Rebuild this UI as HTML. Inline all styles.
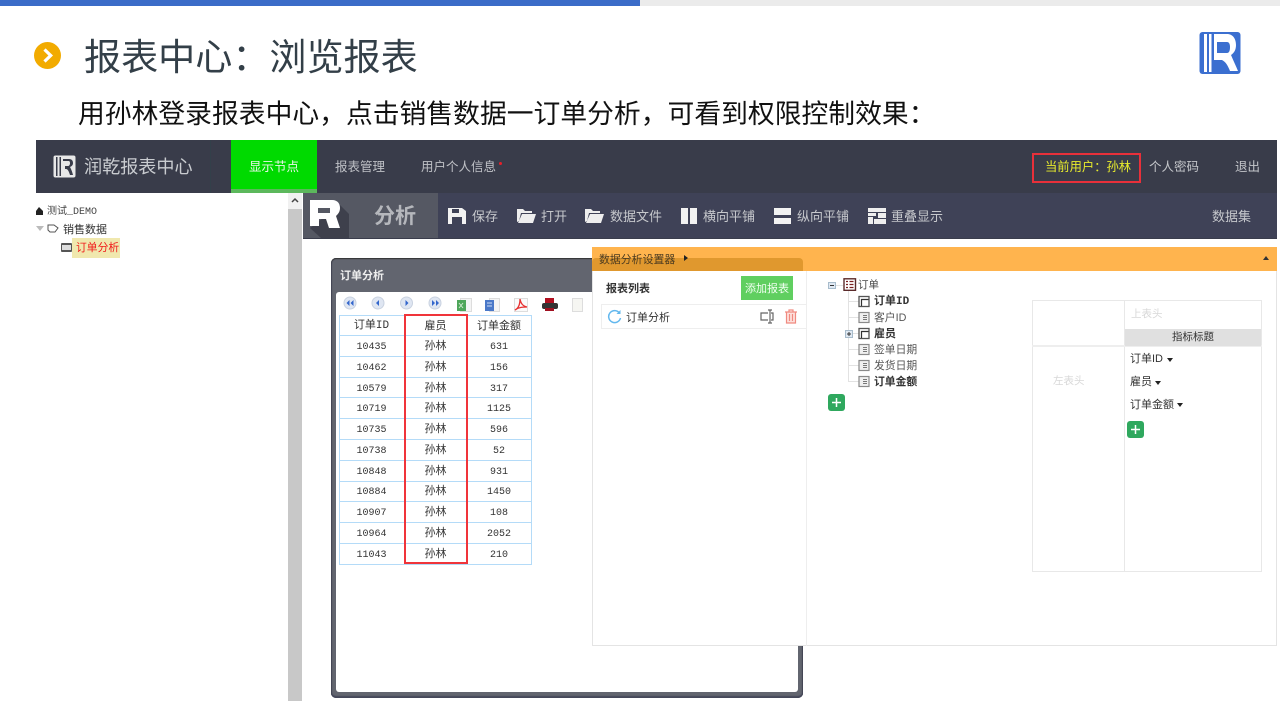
<!DOCTYPE html>
<html><head><meta charset="utf-8">
<style>
html,body{margin:0;padding:0;background:#fff}
#p{position:relative;width:1280px;height:720px;overflow:hidden;background:#fff;font-family:"Liberation Sans","Noto Sans CJK SC",sans-serif}
#p div,#p span.a,#p svg{position:absolute}
.t{white-space:nowrap;line-height:1}
.m{font-family:"Liberation Mono","Noto Sans CJK SC",monospace}
.c{position:absolute;text-align:center;font-size:11px;color:#333;line-height:20px;height:20px;white-space:nowrap}
.c[style*="font-size:10px"]{padding-top:2px;height:18px}
.l{background:#b4dbf8}
</style></head><body><div id="p">
<div style="left:0;top:0;width:640px;height:6px;background:#3b6cc8"></div>
<div style="left:640px;top:0;width:640px;height:6px;background:#ebebeb"></div>

<svg style="left:34px;top:42px" width="27" height="27" viewBox="0 0 27 27"><circle cx="13.500" cy="13.500" r="13.500" fill="#f2ab00"/><path d="M10.500 7.500l6.200 6-6.200 6" fill="none" stroke="#fff" stroke-width="3.200"/></svg>
<div class="t" style="left:84px;top:39px;font-size:37.100px;color:#333f48">报表中心：浏览报表</div>
<div class="t" style="left:78px;top:101px;font-size:26.800px;color:#111">用孙林登录报表中心，点击销售数据一订单分析，可看到权限控制效果：</div>

<svg style="left:1199px;top:32px" width="42" height="43" viewBox="0 0 42 43"><rect x="0.500" y="0" width="41" height="42" rx="3" fill="#3b6fd0"/><rect x="5" y="2" width="3" height="38" fill="#fff"/><rect x="10" y="2" width="2.500" height="38" fill="#fff"/><path fill-rule="evenodd" d="M15 2H28C34 2 37 7 37 13C37 18 35 21 32 23C34 28 37 34 39 39H31C29 34 27 30 23 28H15ZM18 10V21H28C30 21 31 19 31 15C31 12 30 10 28 10Z" fill="#fff"/></svg>

<!-- top nav -->
<div style="left:36px;top:140px;width:1241px;height:53px;background:#393c4a"></div>
<div style="left:210px;top:140px;width:1px;height:53px;background:#33404a"></div>
<div style="left:231px;top:140px;width:86px;height:53px;background:#00da00"></div>
<div style="left:231px;top:189px;width:86px;height:4px;background:#5cb85c"></div>
<svg style="left:53px;top:155px" width="23" height="23" viewBox="0 0 23 23"><rect x="0.500" y="0.500" width="22" height="22" rx="2" fill="#e8e8e8"/><rect x="3" y="2" width="1.500" height="19" fill="#393c4a"/><rect x="6.500" y="2" width="1.500" height="19" fill="#393c4a"/><path d="M10 4h6c3 0 4 2 4 4s-1 3-3 4c1 2 2 4 3 8h-3c-1-3-2-6-4-6h-1v-3h3c1 0 2-1 2-3s-1-2-2-2h-5z" fill="#393c4a"/></svg>
<div class="t" style="left:84px;top:158px;font-size:18.100px;color:#c9ccd0">润乾报表中心</div>
<div class="t" style="left:249px;top:161px;font-size:12.500px;color:#eaf5ea">显示节点</div>
<div class="t" style="left:335px;top:161px;font-size:12.500px;color:#bfc1c6">报表管理</div>
<div class="t" style="left:421px;top:161px;font-size:12.500px;color:#bfc1c6">用户个人信息</div>
<div style="left:499px;top:162px;width:3px;height:3px;background:#e8202a;border-radius:2px"></div>
<div style="left:1032px;top:153px;width:105px;height:26px;border:2px solid #e8303a"></div>
<div class="t" style="left:1045px;top:161px;font-size:12.300px;color:#e8ec2c">当前用户：孙林</div>
<div class="t" style="left:1149px;top:161px;font-size:12.500px;color:#c4c6ca">个人密码</div>
<div class="t" style="left:1235px;top:161px;font-size:12.500px;color:#c4c6ca">退出</div>

<!-- left tree -->
<svg style="left:36px;top:207px" width="7" height="8" viewBox="0 0 7 8"><path d="M0 4L3 0l4 4v4H0z" fill="#222"/></svg>
<div class="t" style="left:47px;top:207px;font-size:10px;color:#444">测试<span class="m">_DEMO</span></div>
<div style="left:36px;top:226px;width:0;height:0;border-left:4.500px solid transparent;border-right:4.500px solid transparent;border-top:5px solid #bbb"></div>
<svg style="left:47px;top:224px" width="12" height="10" viewBox="0 0 12 10"><path d="M1 1h6l4 3-3 4H3L1 6z" fill="#fff" stroke="#555" stroke-width="1"/></svg>
<div class="t" style="left:63px;top:225px;font-size:11px;color:#333">销售数据</div>
<div style="left:72px;top:238px;width:48px;height:20px;background:#f0e8ae"></div>
<div style="left:61px;top:243px;width:11px;height:9px;background:#555;border-radius:1px"></div>
<div style="left:62px;top:245px;width:9px;height:5px;background:#ddd"></div>
<div class="t" style="left:76px;top:243px;font-size:10.800px;color:#f01818">订单分析</div>

<!-- scrollbar -->
<div style="left:288px;top:193px;width:14px;height:508px;background:#c8c8c8"></div>
<div style="left:288px;top:193px;width:14px;height:16px;background:#f1f1f1"></div>
<svg style="left:291px;top:197px" width="8" height="6" viewBox="0 0 8 6"><path d="M1 5l3-3 3 3" fill="none" stroke="#444" stroke-width="1.500"/></svg>

<!-- toolbar -->
<div style="left:303px;top:193px;width:974px;height:45px;background:#3f4257"></div>
<div style="left:303px;top:238px;width:974px;height:1px;background:#3a3d4c"></div>
<div style="left:303px;top:193px;width:135px;height:45px;background:#555863"></div>
<svg style="left:303px;top:193px" width="46" height="45" viewBox="0 0 46 45"><path d="M37 12L46 21V45H18L7 35z" fill="#3e404c"/><path fill-rule="evenodd" d="M7 7H29C35 7 37 11 37 15C37 19 35 21 33 23L37 35H26L23 26H16V33H7ZM15 15V20H27V15Z" fill="#fff"/></svg>
<div class="t" style="left:374px;top:206px;font-size:21px;font-weight:bold;color:#b5b7bc">分析</div>
<svg style="left:448px;top:208px" width="18" height="16" viewBox="0 0 18 16"><path d="M0 0h14l4 3v13H0z" fill="#f2f2f2"/><rect x="4" y="1" width="7" height="4" fill="#3f4257"/><rect x="4" y="9" width="10" height="7" fill="#3f4257"/></svg>
<div class="t" style="left:472px;top:210px;font-size:13px;color:#c6c8cc">保存</div>
<svg style="left:517px;top:208px" width="19" height="16" viewBox="0 0 19 16"><path d="M0 1h6l2 2h7v2H4L2 13l-2 1z" fill="#eee"/><path d="M5 6h14l-3 9H1z" fill="#eee"/></svg>
<div class="t" style="left:541px;top:210px;font-size:13px;color:#c6c8cc">打开</div>
<svg style="left:585px;top:208px" width="19" height="16" viewBox="0 0 19 16"><path d="M0 1h6l2 2h7v2H4L2 13l-2 1z" fill="#eee"/><path d="M5 6h14l-3 9H1z" fill="#eee"/></svg>
<div class="t" style="left:610px;top:210px;font-size:13px;color:#c6c8cc">数据文件</div>
<div style="left:681px;top:208px;width:7px;height:16px;background:#f2f2f2"></div>
<div style="left:690px;top:208px;width:7px;height:16px;background:#f2f2f2"></div>
<div class="t" style="left:703px;top:210px;font-size:13px;color:#c6c8cc">横向平铺</div>
<div style="left:774px;top:208px;width:17px;height:7px;background:#f2f2f2"></div>
<div style="left:774px;top:218px;width:17px;height:6px;background:#f2f2f2"></div>
<div class="t" style="left:797px;top:210px;font-size:13px;color:#c6c8cc">纵向平铺</div>
<svg style="left:868px;top:208px" width="18" height="17" viewBox="0 0 18 17"><path d="M0 0h18v4H0zM0 5h8v3H0zM0 9h5v7H0zM6 11h12v5H6zM10 5h8v5h-8z" fill="#eee"/></svg>
<div class="t" style="left:891px;top:210px;font-size:13px;color:#c6c8cc">重叠显示</div>
<div class="t" style="left:1212px;top:210px;font-size:13px;color:#c6c8cc">数据集</div>

<!-- report window -->
<div style="left:331px;top:258px;width:472px;height:440px;background:#62656f;border-radius:5px;box-shadow:inset 0 1px 1px #333,inset 0 -2px 1px #45485a,inset 1px 0 1px #45485a,inset -1px 0 1px #45485a"></div>
<div style="left:336px;top:292px;width:462px;height:400px;background:#fff;border-radius:3px"></div>
<div class="t" style="left:340px;top:271px;font-size:11px;font-weight:bold;color:#eee">订单分析</div>
<svg style="left:340px;top:295px" width="245" height="18" viewBox="0 0 245 18">
<g fill="#dfe6f2" stroke="#c9d2e0"><circle cx="10" cy="8" r="6"/><circle cx="38" cy="8" r="6"/><circle cx="66.500" cy="8" r="6"/><circle cx="95" cy="8" r="6"/></g>
<g fill="#3366cc"><path d="M6.500 8l3-3v6zM10.500 8l3-3v6zM36 8l3-3v6zM68.500 8l-3-3v6zM92 5l3 3-3 3zM96 5l3 3-3 3z"/></g>
<rect x="120.500" y="3.500" width="11" height="13" fill="#f4f4f4" stroke="#ddd"/><rect x="117" y="5" width="9" height="11" fill="#4ea65a"/><path d="M119 8l4 5M123 8l-4 5" stroke="#cfe8d0"/>
<rect x="149.500" y="3.500" width="10" height="13" fill="#f4f4f4" stroke="#ddd"/><rect x="145" y="5" width="9" height="11" fill="#4a78c8"/><path d="M147 8h5M147 11h5" stroke="#cfdcf4"/>
<rect x="174.500" y="3.500" width="13" height="13" fill="#fafafa" stroke="#ddd"/><path d="M175 15c4-2 5-7 5-11 1 5 3 7 7 8-4 0-8 0-12 3z" fill="none" stroke="#e63030" stroke-width="1.300"/>
<rect x="205" y="3" width="9" height="6" fill="#b01020"/><rect x="202" y="8" width="16" height="6" rx="2" fill="#333"/><rect x="205" y="13" width="9" height="3" fill="#a01020"/>
<rect x="232.500" y="3.500" width="10" height="13" fill="#f6f6f2" stroke="#ddd"/></svg>

<!-- table -->
<div class="l" style="left:339px;top:315px;width:192px;height:1px"></div>
<div class="l" style="left:339px;top:335px;width:192px;height:1px"></div>
<div class="l" style="left:339px;top:356px;width:192px;height:1px"></div>
<div class="l" style="left:339px;top:377px;width:192px;height:1px"></div>
<div class="l" style="left:339px;top:397px;width:192px;height:1px"></div>
<div class="l" style="left:339px;top:418px;width:192px;height:1px"></div>
<div class="l" style="left:339px;top:439px;width:192px;height:1px"></div>
<div class="l" style="left:339px;top:460px;width:192px;height:1px"></div>
<div class="l" style="left:339px;top:481px;width:192px;height:1px"></div>
<div class="l" style="left:339px;top:501px;width:192px;height:1px"></div>
<div class="l" style="left:339px;top:522px;width:192px;height:1px"></div>
<div class="l" style="left:339px;top:543px;width:192px;height:1px"></div>
<div class="l" style="left:339px;top:564px;width:192px;height:1px"></div>
<div class="l" style="left:339px;top:315px;width:1px;height:250px"></div>
<div class="l" style="left:531px;top:315px;width:1px;height:250px"></div>
<div class="c m" style="left:339px;top:316px;width:65px">订单ID</div><div class="c" style="left:404px;top:316px;width:63px">雇员</div><div class="c" style="left:467px;top:316px;width:64px">订单金额</div>
<div class="c m" style="left:339px;top:336px;width:65px;font-size:10px">10435</div><div class="c" style="left:404px;top:336px;width:63px">孙林</div><div class="c m" style="left:467px;top:336px;width:64px;font-size:10px">631</div>
<div class="c m" style="left:339px;top:357px;width:65px;font-size:10px">10462</div><div class="c" style="left:404px;top:357px;width:63px">孙林</div><div class="c m" style="left:467px;top:357px;width:64px;font-size:10px">156</div>
<div class="c m" style="left:339px;top:378px;width:65px;font-size:10px">10579</div><div class="c" style="left:404px;top:378px;width:63px">孙林</div><div class="c m" style="left:467px;top:378px;width:64px;font-size:10px">317</div>
<div class="c m" style="left:339px;top:398px;width:65px;font-size:10px">10719</div><div class="c" style="left:404px;top:398px;width:63px">孙林</div><div class="c m" style="left:467px;top:398px;width:64px;font-size:10px">1125</div>
<div class="c m" style="left:339px;top:419px;width:65px;font-size:10px">10735</div><div class="c" style="left:404px;top:419px;width:63px">孙林</div><div class="c m" style="left:467px;top:419px;width:64px;font-size:10px">596</div>
<div class="c m" style="left:339px;top:440px;width:65px;font-size:10px">10738</div><div class="c" style="left:404px;top:440px;width:63px">孙林</div><div class="c m" style="left:467px;top:440px;width:64px;font-size:10px">52</div>
<div class="c m" style="left:339px;top:461px;width:65px;font-size:10px">10848</div><div class="c" style="left:404px;top:461px;width:63px">孙林</div><div class="c m" style="left:467px;top:461px;width:64px;font-size:10px">931</div>
<div class="c m" style="left:339px;top:481px;width:65px;font-size:10px">10884</div><div class="c" style="left:404px;top:481px;width:63px">孙林</div><div class="c m" style="left:467px;top:481px;width:64px;font-size:10px">1450</div>
<div class="c m" style="left:339px;top:502px;width:65px;font-size:10px">10907</div><div class="c" style="left:404px;top:502px;width:63px">孙林</div><div class="c m" style="left:467px;top:502px;width:64px;font-size:10px">108</div>
<div class="c m" style="left:339px;top:523px;width:65px;font-size:10px">10964</div><div class="c" style="left:404px;top:523px;width:63px">孙林</div><div class="c m" style="left:467px;top:523px;width:64px;font-size:10px">2052</div>
<div class="c m" style="left:339px;top:544px;width:65px;font-size:10px">11043</div><div class="c" style="left:404px;top:544px;width:63px">孙林</div><div class="c m" style="left:467px;top:544px;width:64px;font-size:10px">210</div>
<div style="left:404px;top:314px;width:60px;height:246px;border:2px solid #f0343a"></div>

<!-- settings panel -->
<div style="left:592px;top:247px;width:685px;height:24px;background:#ffb44e"></div>
<div style="left:592px;top:258px;width:211px;height:13px;background:#e0982e;border-radius:4px 4px 0 0"></div>
<div class="t" style="left:599px;top:255px;font-size:10.900px;color:#4a3a20">数据分析设置器</div>
<div style="left:684px;top:255px;width:0;height:0;border-top:3px solid transparent;border-bottom:3px solid transparent;border-left:4px solid #222"></div>
<div style="left:1263px;top:256px;width:0;height:0;border-left:3px solid transparent;border-right:3px solid transparent;border-bottom:4px solid #333"></div>
<div style="left:592px;top:271px;width:685px;height:375px;background:#fff;border:1px solid #e4e4e4;border-top:0;box-sizing:border-box"></div>
<div style="left:806px;top:271px;width:1px;height:375px;background:#eee"></div>
<div style="left:601px;top:304px;width:206px;height:1px;background:#eee"></div>
<div class="t" style="left:606px;top:284px;font-size:11px;font-weight:bold;color:#333">报表列表</div>
<div style="left:741px;top:276px;width:52px;height:24px;background:#60cf60"></div>
<div class="t" style="left:745px;top:284px;font-size:11px;color:#f0fff0">添加报表</div>
<div style="left:601px;top:304px;width:205px;height:25px;border:1px solid #eee;border-right:0;box-sizing:border-box"></div>
<svg style="left:607px;top:309px" width="15" height="15" viewBox="0 0 15 15"><path d="M12.500 4A6 6 0 1 0 13.500 9" fill="none" stroke="#63b8ee" stroke-width="1.500"/><path d="M13.500 1v4h-4z" fill="#63b8ee"/></svg>
<div class="t" style="left:626px;top:313px;font-size:11px;color:#333">订单分析</div>
<svg style="left:760px;top:309px" width="15" height="15" viewBox="0 0 15 15"><path d="M8 4H1v7h7M11 4h2v7h-2M10 1v13M8 1h4M8 14h4" fill="none" stroke="#666" stroke-width="1.200"/></svg>
<svg style="left:784px;top:309px" width="14" height="15" viewBox="0 0 14 15"><path d="M2.500 3v11h9V3z" fill="#fde0dc"/><path d="M1 3h12M5 3V1h4v2M2.500 3v11h9V3M5.500 5v7M8.500 5v7" fill="none" stroke="#f08a80" stroke-width="1.200"/></svg>

<!-- field tree -->
<svg style="left:826px;top:276px" width="100" height="125" viewBox="0 0 100 125">
<path d="M22.500 14v92M22.500 25.500h10M22.500 41.500h10M22.500 57.500h10M22.500 73.500h10M22.500 89.500h10M22.500 105.500h10M9 9.500h8" fill="none" stroke="#e2e2e2"/>
<rect x="2.500" y="6.500" width="7" height="6" fill="#dfe8f2" stroke="#a8bccc"/><path d="M4 9.500h4" stroke="#333"/>
<rect x="19.500" y="54.500" width="7" height="7" fill="#dfe8f2" stroke="#a8bccc"/><path d="M21 58h4M23 56v4" stroke="#333"/>
<rect x="18" y="2.800" width="11.500" height="11.500" fill="#fff" stroke="#5a2a2a" stroke-width="1.400"/><path d="M20 5.500h2M23.500 5.500h4M20 8.500h2M23.500 8.500h4M20 11.500h2M23.500 11.500h4" stroke="#7a2020" stroke-width="1.200"/>
</svg>
<svg style="left:858px;top:295px" width="13" height="94" viewBox="0 0 13 94">
<g fill="#fff" stroke="#555" stroke-width="1.300"><rect x="1" y="1.500" width="10" height="10"/><rect x="1" y="33.500" width="10" height="10"/></g>
<path d="M3.500 11V4.500H10.500M3.500 43V36.500H10.500" fill="none" stroke="#333" stroke-width="1.200"/>
<g fill="#f0f0f0" stroke="#8a8a8a" stroke-width="1.200"><rect x="1" y="17.500" width="10" height="10"/><rect x="1" y="49.500" width="10" height="10"/><rect x="1" y="65.500" width="10" height="10"/><rect x="1" y="81.500" width="10" height="10"/></g>
<path d="M5 20.500h4M5 22.500h4M5 24.500h4M5 52.500h4M5 54.500h4M5 56.500h4M5 68.500h4M5 70.500h4M5 72.500h4M5 84.500h4M5 86.500h4M5 88.500h4" stroke="#777"/>
</svg>
<div class="t" style="left:858px;top:280px;font-size:10.500px;color:#444">订单</div>
<div class="t" style="left:874px;top:296px;font-size:11px;font-weight:bold;color:#333">订单<span class="m">ID</span></div>
<div class="t" style="left:874px;top:313px;font-size:10.800px;color:#555">客户ID</div>
<div class="t" style="left:874px;top:329px;font-size:11px;font-weight:bold;color:#333">雇员</div>
<div class="t" style="left:874px;top:345px;font-size:10.800px;color:#555">签单日期</div>
<div class="t" style="left:874px;top:361px;font-size:10.800px;color:#555">发货日期</div>
<div class="t" style="left:874px;top:377px;font-size:10.800px;font-weight:bold;color:#333">订单金额</div>
<svg style="left:828px;top:394px" width="17" height="17" viewBox="0 0 17 17"><rect width="17" height="17" rx="3" fill="#2fa85e"/><path d="M8.500 4v9M4 8.500h9" stroke="#fff" stroke-width="1.500"/></svg>

<!-- pivot -->
<div style="left:1032px;top:300px;width:230px;height:272px;border:1px solid #e8e8e8;box-sizing:border-box"></div>
<div style="left:1124px;top:300px;width:1px;height:272px;background:#e8e8e8"></div>
<div style="left:1032px;top:345px;width:230px;height:2px;background:#eee"></div>
<div style="left:1125px;top:329px;width:136px;height:17px;background:#e0e0e0"></div>
<div class="t" style="left:1131px;top:309px;font-size:10.500px;color:#d8d8d8">上表头</div>
<div class="t" style="left:1172px;top:332px;font-size:10.500px;color:#333">指标标题</div>
<div class="t" style="left:1053px;top:376px;font-size:10.500px;color:#d8d8d8">左表头</div>
<div class="t" style="left:1130px;top:354px;font-size:11px;color:#333">订单ID</div>
<div style="left:1167px;top:358px;width:0;height:0;border-left:3.500px solid transparent;border-right:3.500px solid transparent;border-top:4px solid #222"></div>
<div class="t" style="left:1130px;top:377px;font-size:11px;color:#333">雇员</div>
<div style="left:1155px;top:381px;width:0;height:0;border-left:3.500px solid transparent;border-right:3.500px solid transparent;border-top:4px solid #222"></div>
<div class="t" style="left:1130px;top:400px;font-size:11px;color:#333">订单金额</div>
<div style="left:1177px;top:403px;width:0;height:0;border-left:3.500px solid transparent;border-right:3.500px solid transparent;border-top:4px solid #222"></div>
<svg style="left:1127px;top:421px" width="17" height="17" viewBox="0 0 17 17"><rect width="17" height="17" rx="3" fill="#2fa85e"/><path d="M8.500 4v9M4 8.500h9" stroke="#fff" stroke-width="1.500"/></svg>
</div></body></html>
